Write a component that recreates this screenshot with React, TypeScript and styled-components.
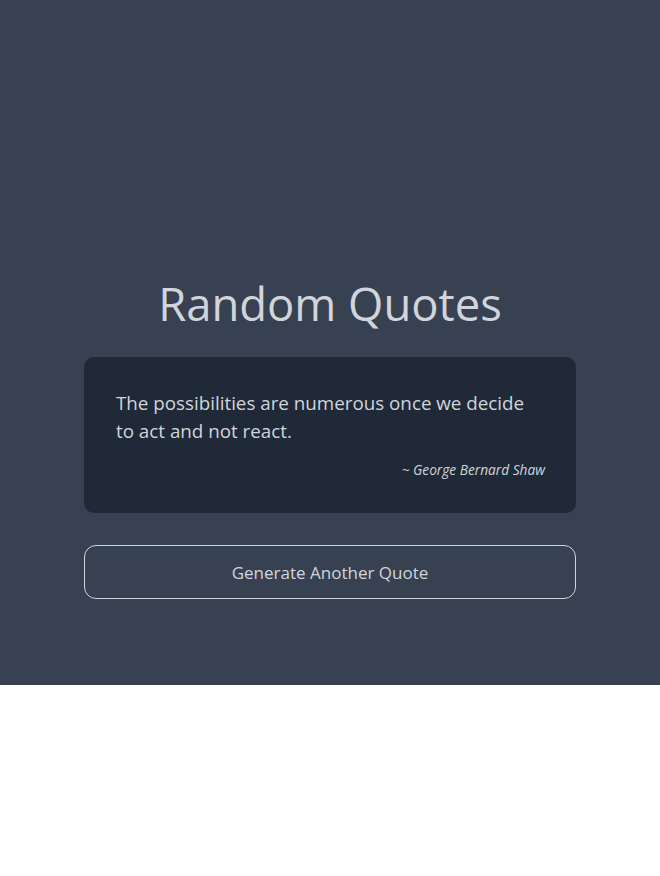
import React, { useState } from "react";
import styled, { createGlobalStyle } from "styled-components";

const quotes = [
	{ text: "The possibilities are numerous once we decide to act and not react.", author: "George Bernard Shaw" },
	{ text: "Whatever you are, be a good one.", author: "Abraham Lincoln" },
	{ text: "Well begun is half done.", author: "Aristotle" },
];

const GlobalStyle = createGlobalStyle`
	body {
		margin: 0;
		background: #ffffff;
		font-family: "Open Sans", "Noto Sans", sans-serif;
	}
`;

const App = () => {
	const [index, setIndex] = useState(0);
	const quote = quotes[index];

	return (
		<>
			<GlobalStyle />
			<Page>
				<Content>
					<Title>Random Quotes</Title>
					<Card>
						<QuoteText>{quote.text}</QuoteText>
						<Author>~ {quote.author}</Author>
					</Card>
					<Button onClick={() => setIndex((index + 1) % quotes.length)}>Generate Another Quote</Button>
				</Content>
			</Page>
		</>
	);
};

export default App;

const Page = styled.main`
	background: #374151;
	height: 685px;
	box-sizing: border-box;
	padding-top: 279px;
	display: flex;
	justify-content: center;
`;

const Content = styled.div`
	width: 492px;
	display: flex;
	flex-direction: column;
`;

const Title = styled.h1`
	margin: 0 0 30px;
	font-size: 45.4px;
	line-height: 48px;
	font-weight: 400;
	text-align: center;
	color: #d1d5db;
`;

const Card = styled.section`
	background: #1f2937;
	border-radius: 10px;
	padding: 32px 31px 32px 32px;
	height: 156px;
	box-sizing: border-box;
	display: flex;
	flex-direction: column;
`;

const QuoteText = styled.p`
	margin: 0;
	font-size: 18.8px;
	line-height: 28px;
	color: #d1d5db;
`;

const Author = styled.p`
	margin: 15px 0 0;
	font-size: 13.7px;
	line-height: 20px;
	font-style: italic;
	text-align: right;
	color: #d1d5db;
`;

const Button = styled.button`
	margin-top: 32px;
	height: 54px;
	border: 1px solid #d1d5db;
	border-radius: 12px;
	background: transparent;
	color: #d1d5db;
	font-family: inherit;
	font-size: 17px;
	cursor: pointer;
`;
